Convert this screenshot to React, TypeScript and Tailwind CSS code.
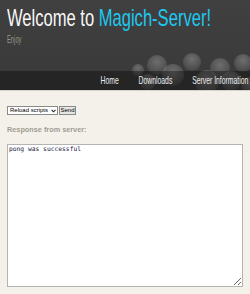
import { useState } from 'react'

function Bokeh() {
  const dots = [
    [27, 25, 10], [62, 22, 9], [43, 35, 11], [90, 28, 10], [113, 23, 9],
    [77, 42, 12], [101, 41, 10], [18, 42, 8], [120, 46, 9], [8, 30, 6],
  ]
  return (
    <svg className="absolute right-0 top-[40px] pointer-events-none" width="120" height="51" viewBox="0 0 120 51">
      <defs>
        <radialGradient id="b" cx="50%" cy="35%" r="65%">
          <stop offset="0%" stopColor="#ffffff" stopOpacity="0.26" />
          <stop offset="100%" stopColor="#ffffff" stopOpacity="0.06" />
        </radialGradient>
      </defs>
      {dots.map(([cx, cy, r], i) => (
        <circle key={i} cx={cx} cy={cy} r={r} fill="url(#b)" />
      ))}
    </svg>
  )
}

export default function App() {
  const [action, setAction] = useState('reload')
  return (
    <div className="w-[250px] h-[294px] bg-[#f3f1ea] overflow-hidden font-['Liberation_Sans',Arial,sans-serif]">
      <header className="relative bg-gradient-to-b from-[#404040] to-[#393939]">
        <Bokeh />
        <div className="relative h-[71px] px-[7px] pt-[6px]">
          <h1 className="inline-block origin-left scale-x-[0.69] text-[24px] leading-[24px] text-[#f7f7f7] whitespace-nowrap">
            Welcome to <span className="text-[#1ec8ef]">Magich-Server!</span>
          </h1>
          <p className="mt-[2px] origin-left scale-x-[0.58] text-[10px] leading-[10px] text-[#9a968a]">Enjoy</p>
        </div>
        <nav className="relative h-[20px] bg-black/35 border-b border-[#d6d3c8] flex items-center justify-end pr-[2px]">
          <div className="origin-right scale-x-[0.62] flex gap-[32px] text-[11px] leading-[11px] text-[#ececec] whitespace-nowrap">
            <span>Home</span>
            <span>Downloads</span>
            <span>Server Information</span>
          </div>
        </nav>
      </header>
      <main className="px-[7px] pt-[15px]">
        <form className="flex items-center gap-[1px]" onSubmit={(e) => e.preventDefault()}>
          <div className="relative">
            <select
              value={action}
              onChange={(e) => setAction(e.target.value)}
              className="appearance-none block h-[9px] w-[51px] border border-[#8a8a8a] bg-white text-[6px] leading-[7px] text-black pl-[2px] pr-[8px] py-0"
            >
              <option value="reload">Reload scripts</option>
            </select>
            <svg className="absolute right-[2px] top-[3px] pointer-events-none" width="5" height="4" viewBox="0 0 5 4">
              <path d="M0.5 0.8 L2.5 2.8 L4.5 0.8" fill="none" stroke="#222" strokeWidth="1.1" />
            </svg>
          </div>
          <button className="h-[9px] w-[17px] border border-[#8a8a8a] bg-[#e6e6e6] text-[6px] leading-[7px] text-black p-0">
            Send
          </button>
        </form>
        <p className="mt-[11px] text-[7.3px] leading-[8px] font-bold text-[#a09d92]">Response from server:</p>
        <textarea
          readOnly
          value="pong was successful"
          className="mt-[10px] block w-[236px] h-[143px] bg-white border border-[#b3b3b3] font-['DejaVu_Sans_Mono',monospace] text-[6.3px] leading-[7px] text-[#1a1a40] p-0 pl-[1px] resize-y"
        />
      </main>
    </div>
  )
}
